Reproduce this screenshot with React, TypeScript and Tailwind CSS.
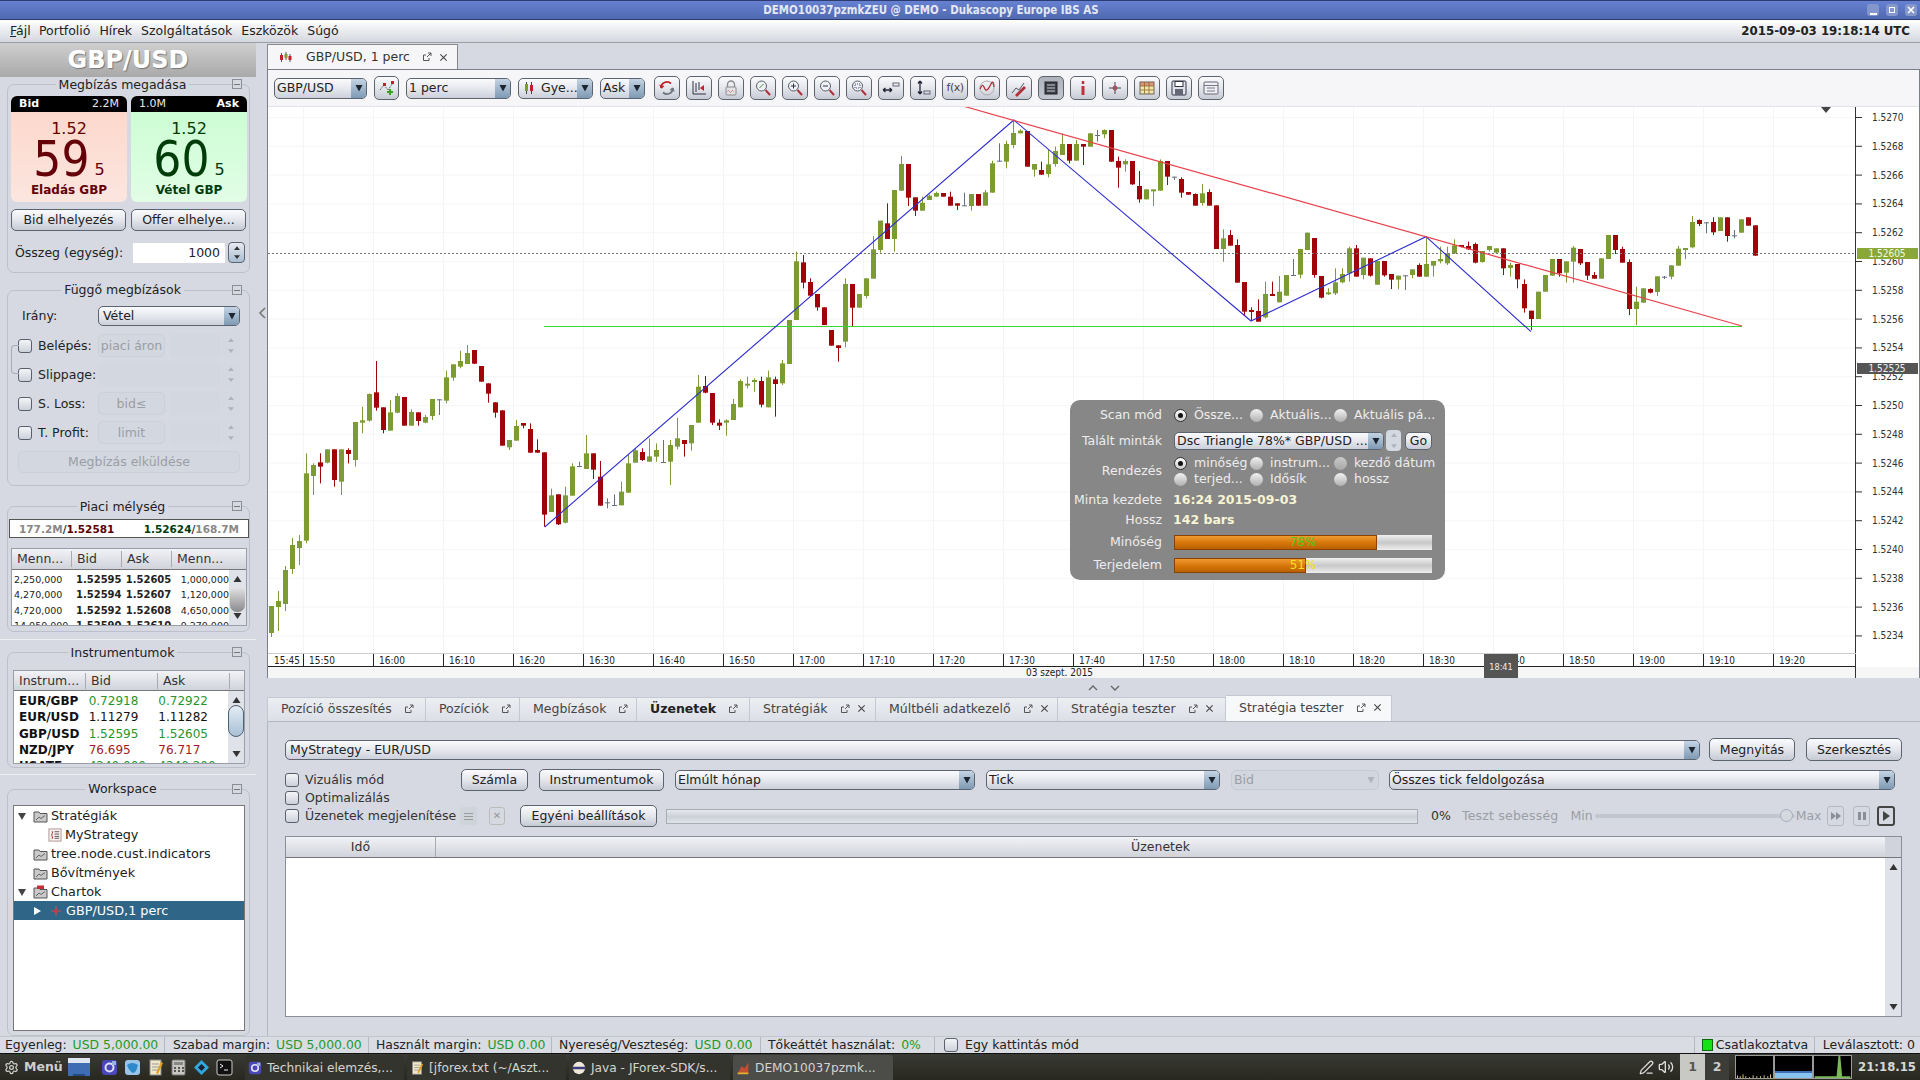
import React from "react";
import { Settings, Volume2, PenLine } from "lucide-react";

type C = [number, number, number, number, number];
// 1 green, 0 red, 2 doji; body top, body bottom, wick top, wick bottom (y = 100 + v / 3)
const SEG1: C[] = [
[1,1518,1599,1518,1611],[1,1503,1521,1473,1593],[1,1410,1512,1398,1533],
[1,1335,1407,1314,1422],[1,1323,1344,1305,1395],[1,1120,1322,1060,1330],[1,1095,1128,1090,1185],[0,1087,1100,1060,1150],[1,1048,1088,1048,1090],[0,1048,1140,1048,1160],[1,1048,1145,1048,1185],[0,1050,1062,1045,1090],[1,966,1080,966,1100],[1,961,968,920,1000],[1,882,962,880,965],[0,877,923,783,932],[0,922,990,922,1000],[1,937,992,900,992],[1,888,938,880,940],[0,891,977,891,977],[1,936,977,928,977],[0,937,963,937,977],[1,951,968,945,970],[1,897,948,897,960],[2,898,900,898,945],[1,832,902,812,910],[1,793,833,793,842],[1,783,800,752,805],[1,759,792,735,792],[0,750,791,750,792],[0,798,845,798,845],[0,850,881,850,908],[0,907,938,907,953],[0,931,1037,931,1037],[1,1020,1042,1020,1050],[1,978,1022,960,1022],[0,969,977,969,985],[0,987,1058,970,1058],[0,1050,1058,1018,1058],[0,1057,1244,1057,1280],[1,1186,1236,1166,1236],[0,1183,1273,1183,1275],[1,1186,1268,1160,1270],[1,1099,1187,1090,1187],[2,1098,1100,1085,1100],[1,1060,1107,1005,1107],[0,1060,1109,1060,1137],[0,1130,1217,1083,1217],[2,1207,1209,1195,1225],[2,1215,1217,1183,1217],[1,1175,1216,1145,1216],[1,1090,1178,1065,1178],[1,1051,1088,1045,1088],[0,1056,1080,1045,1083],[1,1069,1085,1015,1085],[1,1050,1070,1030,1085],[2,1086,1088,1020,1088],[1,1035,1085,1020,1155],[1,1015,1040,953,1048],[0,1020,1032,1020,1070],[1,975,1030,975,1052],[1,860,968,825,968],[0,858,878,828,880],[0,879,968,879,975],[0,968,977,958,990],[1,961,968,958,1007],[1,912,960,897,960],[1,843,922,838,922],[1,851,855,830,865],[1,840,844,835,875],[0,843,914,830,922],[1,832,922,812,922],[0,838,852,830,950],[1,790,850,780,855],[1,660,792,660,792],[1,484,660,455,660],[0,487,548,465,565],[0,546,587,535,590],[0,582,622,582,632],[0,622,675,622,675],[0,690,737,690,737],[0,736,744,736,785],[1,552,725,535,742],[0,552,623,552,680],[1,582,623,582,623],[1,535,588,535,595],[1,448,536,408,536],[1,362,450,362,458],[0,370,417,310,417],[1,270,417,270,455],[1,192,272,168,272],[0,192,293,192,318],[0,292,332,292,348],[1,308,332,290,332],[1,287,300,283,300],[1,279,290,275,290],[0,279,290,279,290],[0,290,317,275,317],[0,310,317,310,330],[2,316,318,278,318],[1,282,318,282,332],[0,282,317,282,317],[1,277,317,270,317],[1,190,278,182,278],[2,182,184,130,185],[1,132,185,122,205],[1,99,135,60,145],[1,92,100,88,100],[0,93,200,93,200],[1,192,209,192,230],[0,210,224,185,225],[1,193,222,150,232],[1,153,192,140,200],[1,132,165,100,165],[0,132,182,132,190],[1,132,182,120,182],[0,132,140,132,195],[1,100,140,100,140],[2,105,107,90,125],
];
const SEG2: C[] = [
[1,90,103,88,115],[0,90,185,90,185],[0,183,203,170,263],[1,183,193,178,215],[0,183,253,183,255],[0,258,298,213,308],[1,268,298,268,298],[1,268,272,268,318],[1,183,272,178,272],[0,183,230,183,255],[2,230,232,230,240],[0,237,278,232,293],[0,276,284,276,285],[0,282,317,280,317],[1,280,309,252,317],[0,276,317,268,317],[0,316,447,316,447],[1,415,447,388,485],[0,405,437,390,437],[0,435,548,418,548],[0,546,635,546,645],[0,630,636,622,660],[0,633,665,598,665],[1,582,652,545,655],[0,582,587,545,587],[1,575,607,528,607],[1,525,587,525,587],[2,525,527,477,527],[1,447,524,447,535],[1,398,450,398,450],[0,414,525,414,533],[0,528,593,528,595],[1,577,583,565,585],[1,547,580,505,585],[1,522,547,505,550],[1,445,520,440,545],[0,445,530,435,530],[1,473,525,473,538],[0,475,527,475,530],[1,483,554,483,555],[0,483,526,483,530],[0,522,539,522,567],[1,527,539,527,568],[2,526,528,526,570],[1,508,525,508,535],[0,495,530,490,530],[1,492,530,410,530],[1,483,497,483,530],[1,477,484,440,490],[1,460,490,440,495],[1,436,460,418,462],[0,435,440,435,442],[0,438,448,425,450],[0,432,488,428,490],[1,453,486,453,488],[1,438,450,438,455],[1,445,458,445,458],[0,445,505,445,525],[1,495,504,488,530],[0,492,538,492,565],[0,552,625,538,638],[0,632,657,632,690],[1,575,657,575,657],[1,525,575,525,575],[1,477,527,477,527],[0,477,520,477,530],[1,484,518,484,548],[1,443,485,438,548],[0,447,490,447,495],[0,486,527,486,540],[0,525,536,516,536],[1,475,536,475,536],[1,405,477,405,477],[0,405,450,405,462],[0,447,488,440,488],[0,486,627,478,645],[1,605,627,560,675],[1,565,608,565,608],[0,567,578,565,580],[1,529,576,529,588],[2,530,532,528,537],[1,496,530,496,538],[1,446,497,438,497],[1,444,449,444,478],[1,366,442,348,445],[0,360,372,358,378],[2,367,369,367,400],[0,366,397,352,405],[1,352,393,352,393],[0,352,408,352,425],[2,406,408,390,415],[1,358,398,358,398],[0,352,377,352,377],[0,376,467,376,467],
];

const COL: Record<number, string> = { 0: "#a00408", 1: "#7d9b33", 2: "#667080" };

function Candle({ x, c }: { x: number; c: C }) {
  const [t, a, b, h, l] = c;
  const y = (v: number) => 100 + v / 3;
  return (
    <g>
      <rect x={x} y={y(h)} width={1} height={Math.max(1, (l - h) / 3)} fill={COL[t]} />
      {t === 2 ? (
        <rect x={x - 2} y={y(a)} width={5} height={1} fill={COL[2]} />
      ) : (
        <rect x={x - 2} y={y(a)} width={5} height={Math.max(2, (b - a) / 3)} fill={COL[t]} />
      )}
    </g>
  );
}

const PRICES = ["1.5270","1.5268","1.5266","1.5264","1.5262","1.5260","1.5258","1.5256","1.5254","1.5252","1.5250","1.5248","1.5246","1.5244","1.5242","1.5240","1.5238","1.5236","1.5234"];
const TIMES = ["15:50","16:00","16:10","16:20","16:30","16:40","16:50","17:00","17:10","17:20","17:30","17:40","17:50","18:00","18:10","18:20","18:30","18:40","18:50","19:00","19:10","19:20"];
const COND = "'DejaVu Sans Condensed','DejaVu Sans',sans-serif";

function Chart() {
  return (
    <svg viewBox="268 107 1651 571" className="block h-[571px] w-[1651px]">
      <rect x="268" y="107" width="1651" height="571" fill="#ffffff" />
      {TIMES.map((_, i) => <rect key={i} x={303 + i * 70} y="107" width="1" height="546" fill="#f5f5f5" />)}
      {PRICES.map((_, i) => <rect key={i} x="268" y={117 + i * 28.8} width="1588" height="1" fill="#f6f6f6" />)}
      {SEG1.map((c, i) => <Candle key={i} x={271 + i * 7} c={c} />)}
      {SEG2.map((c, i) => <Candle key={i} x={1104 + i * 7} c={c} />)}
      <line x1="268" y1="253.5" x2="1856" y2="253.5" stroke="#777" strokeDasharray="2 2" />
      <line x1="544" y1="326.5" x2="1742" y2="326.5" stroke="#35d935" strokeWidth="1.2" />
      <polyline points="544.7,527 1013.8,120 1251,321 1426,236.7 1531,331.7" fill="none" stroke="#2d2dd2" strokeWidth="1.1" />
      <line x1="964.5" y1="106.5" x2="1742" y2="326" stroke="#e8404a" strokeWidth="1.2" />
      <polygon points="1821,107 1831,107 1826,113" fill="#444" />
      {/* price axis */}
      <rect x="1855" y="107" width="1" height="571" fill="#333" />
      {PRICES.map((p, i) => (
        <g key={p}>
          <rect x="1856" y={117 + i * 28.8} width="6" height="1" fill="#333" />
          <text x="1872" y={121 + i * 28.8} fontSize="10" fontFamily={COND} fill="#333">{p}</text>
        </g>
      ))}
      <rect x="1857" y="248" width="61" height="11" fill="#8aa83a" />
      <text x="1887" y="257" fontSize="10" textAnchor="middle" fontFamily={COND} fill="#f4f8e0">1.52605</text>
      <rect x="1857" y="363" width="61" height="11" fill="#555555" />
      <text x="1887" y="372" fontSize="10" textAnchor="middle" fontFamily={COND} fill="#eeeeee">1.52525</text>
      {/* time axis */}
      <rect x="268" y="653" width="1588" height="1" fill="#ccc" />
      <rect x="268" y="666" width="1588" height="1" fill="#222" />
      <rect x="268" y="667" width="1651" height="11" fill="#f6f6f6" />
      <text x="274" y="664" fontSize="10" fontFamily={COND} fill="#222">15:45</text>
      {TIMES.map((t, i) => (
        <g key={t}>
          <rect x={303 + i * 70} y="654" width="1" height="12" fill="#222" />
          <text x={309 + i * 70} y="664" fontSize="10" fontFamily={COND} fill="#222">{t}</text>
        </g>
      ))}
      <rect x="1855" y="654" width="1" height="24" fill="#333" />
      <text x="1026" y="676" fontSize="10" fontFamily={COND} fill="#222">03 szept. 2015</text>
      <rect x="1484" y="654" width="34" height="24" fill="#555" />
      <text x="1501" y="670" fontSize="9" textAnchor="middle" fontFamily={COND} fill="#eee">18:41</text>
    </svg>
  );
}

const Tri = ({ color = "#223" }: { color?: string }) => (
  <svg viewBox="0 0 8 8" className="h-[8px] w-[8px]"><polygon points="0.5,1 7.5,1 4,7.5" fill={color} /></svg>
);

function Btn({ className = "", children, disabled, pressed }: { className?: string; children?: React.ReactNode; disabled?: boolean; pressed?: boolean }) {
  if (disabled) return <div className={"flex shrink-0 items-center justify-center rounded-[5px] border border-[#ccd0d8] bg-[#d3d7df] text-[#9a9ea6] " + className}>{children}</div>;
  if (pressed) return <div className={"flex shrink-0 items-center justify-center rounded-[5px] border border-[#5c6470] bg-linear-to-b from-[#aeb2ba] to-[#c2c6ce] text-[#222] " + className}>{children}</div>;
  return <div className={"flex shrink-0 items-center justify-center rounded-[5px] border border-[#5c6470] bg-linear-to-b from-[#fbfbfd] via-[#e4e6ec] to-[#c6cad4] text-[#222] " + className}>{children}</div>;
}

function Sel({ className = "", text, disabled }: { className?: string; text: React.ReactNode; disabled?: boolean }) {
  return (
    <div className={"flex shrink-0 items-stretch overflow-hidden rounded-[5px] border " + (disabled ? "border-[#c6cad2] bg-[#d2d6de] text-[#9a9ea6] " : "border-[#5c6470] bg-linear-to-b from-[#fbfbfd] via-[#e6e8ee] to-[#ccd0da] text-[#222] ") + className}>
      <div className="flex min-w-0 flex-1 items-center overflow-hidden whitespace-nowrap pl-[2px]">{text}</div>
      <div className={"flex w-[15px] shrink-0 items-center justify-center " + (disabled ? "" : "bg-linear-to-b from-[#c4d4e4] to-[#7e9ab4]")}><Tri color={disabled ? "#b0b4bc" : "#1c2430"} /></div>
    </div>
  );
}

const Check = ({ dim }: { dim?: boolean }) => (
  <div className={"h-[14px] w-[14px] shrink-0 rounded-[3px] border bg-linear-to-b from-[#f4f5f8] to-[#cdd1da] " + (dim ? "border-[#8a8f98]" : "border-[#59606c]")} />
);

function Spin({ className = "", disabled }: { className?: string; disabled?: boolean }) {
  return (
    <div className={"flex shrink-0 flex-col items-center justify-around rounded-[4px] " + (disabled ? "bg-[#d4d8e0] " : "border border-[#5c6470] bg-linear-to-b from-[#e8eaf0] to-[#a9bed2] ") + className}>
      <svg viewBox="0 0 8 5" className="h-[4px] w-[6px]"><polygon points="0,5 8,5 4,0" fill={disabled ? "#aeb2ba" : "#333"} /></svg>
      <svg viewBox="0 0 8 5" className="h-[4px] w-[6px]"><polygon points="0,0 8,0 4,5" fill={disabled ? "#aeb2ba" : "#333"} /></svg>
    </div>
  );
}

function Group({ title, className = "", up, children }: { title: string; className?: string; up?: boolean; children?: React.ReactNode }) {
  return (
    <div className={"relative ml-[7px] w-[243px] rounded-[7px] border border-[#bcc0ca] " + className}>
      <div className={"absolute left-0 right-[12px] flex justify-center " + (up ? "-top-[9px]" : "-top-[8px]")}>
        <span className="bg-[#d6d9e1] px-[3px] leading-[16px] text-[#222]">{title}</span>
      </div>
      <div className="absolute -top-[6px] right-[7px] flex h-[10px] w-[10px] items-center justify-center border border-[#8a8e96] bg-[#d6d9e1]">
        <div className="h-[1px] w-[6px] bg-[#777]" />
      </div>
      {children}
    </div>
  );
}

function PriceBox({ side }: { side: "bid" | "ask" }) {
  const bid = side === "bid";
  const col = bid ? "text-[#640008]" : "text-[#003c0a]";
  return (
    <div className={"flex h-[106px] w-[116px] flex-col items-center overflow-hidden rounded-[6px] " + (bid ? "bg-linear-to-b from-[#fdd6c9] to-[#fbe6df]" : "bg-linear-to-b from-[#c8fdd0] to-[#e2fde6]")}>
      <div className="flex h-[16px] w-full shrink-0 items-center justify-between bg-black px-[8px] text-[11px] text-[#e8e8e8]">
        {bid ? <><b className="text-white">Bid</b><span>2.2M</span></> : <><span>1.0M</span><b className="text-white">Ask</b></>}
      </div>
      <div className={"mt-[8px] h-[17px] text-[16px] leading-[17px] " + col}>1.52</div>
      <div className={"mt-[2px] flex h-[41px] items-end gap-[5px] " + col}>
        <span className="h-[41px] font-['DejaVu_Sans_Condensed','DejaVu_Sans',sans-serif] text-[49px] leading-[41px]">{bid ? "59" : "60"}</span>
        <span className="mb-[2px] h-[16px] text-[16px] leading-[16px]">5</span>
      </div>
      <div className={"mt-[2px] h-[16px] text-[12px] font-bold leading-[16px] " + col}>{bid ? "Eladás GBP" : "Vétel GBP"}</div>
    </div>
  );
}

function OrderRow({ label, btn, wide }: { label: string; btn?: string; wide?: boolean }) {
  return (
    <div className="flex h-[23px] items-center pl-[10px]">
      <Check />
      <span className="ml-[6px] w-[60px] whitespace-nowrap">{label}</span>
      {wide ? (
        <div className="h-[23px] w-[122px] rounded-[4px] bg-[#d3d7df]" />
      ) : (
        <>
          <Btn disabled className="h-[23px] w-[67px]">{btn}</Btn>
          <div className="ml-[5px] h-[23px] w-[50px] rounded-[2px] bg-[#d3d7df]" />
        </>
      )}
      <Spin disabled className="ml-[2px] h-[23px] w-[18px]" />
    </div>
  );
}

const DEPTH = [
  ["2,250,000", "1.52595", "1.52605", "1,000,000"],
  ["4,270,000", "1.52594", "1.52607", "1,120,000"],
  ["4,720,000", "1.52592", "1.52608", "4,650,000"],
  ["14,050,000", "1.52590", "1.52610", "9,270,000"],
];
const INSTR: [string, string, string, string][] = [
  ["EUR/GBP", "0.72918", "0.72922", "text-[#25962f]"],
  ["EUR/USD", "1.11279", "1.11282", "text-[#111]"],
  ["GBP/USD", "1.52595", "1.52605", "text-[#25962f]"],
  ["NZD/JPY", "76.695", "76.717", "text-[#a01c1c]"],
  ["USATE", "4240.000", "4240.200", "text-[#25962f]"],
];

function VScroll({ className = "" }: { className?: string }) {
  return (
    <div className={"flex shrink-0 flex-col items-center justify-between bg-[#dfe2e8] py-[6px] " + className}>
      <svg viewBox="0 0 8 6" className="h-[6px] w-[9px]"><polygon points="0,6 8,6 4,0" fill="#333" /></svg>
      <svg viewBox="0 0 8 6" className="h-[6px] w-[9px]"><polygon points="0,0 8,0 4,6" fill="#333" /></svg>
    </div>
  );
}

const Arrow = ({ open, white }: { open?: boolean; white?: boolean }) => (
  <svg viewBox="0 0 8 8" className="h-[8px] w-[8px] shrink-0">
    {open ? <polygon points="0,1 8,1 4,8" fill="#444" /> : <polygon points="1,0 8,4 1,8" fill={white ? "#fff" : "#444"} />}
  </svg>
);

const FolderIcon = ({ red }: { red?: boolean }) => (
  <svg viewBox="0 0 15 14" className="h-[14px] w-[15px] shrink-0">
    <path d="M1 3h5l1 1.5h7V13H1z" fill="#c9c9c9" stroke="#555" strokeWidth="1" />
    {red && <rect x="4" y="0.5" width="7" height="3.5" fill="#c0303a" />}
    <path d="M3 11l3-3 2 1.5 4-3" fill="none" stroke="#666" strokeWidth="1" />
  </svg>
);

function TreeRow({ pad, arrow, open, icon, text, selected }: { pad: string; arrow?: boolean; open?: boolean; icon: React.ReactNode; text: string; selected?: boolean }) {
  return (
    <div className={"flex h-[19px] items-center " + pad + (selected ? " bg-[#2f6688] text-white" : " text-[#222]")}>
      <div className="flex w-[15px] shrink-0 justify-start">{arrow && <Arrow open={open} white={selected} />}</div>
      {icon}
      <span className="ml-[3px] whitespace-nowrap text-[12.8px]">{text}</span>
    </div>
  );
}

function Left() {
  return (
    <div className="w-[256px] shrink-0">
      <div className="flex h-[34px] items-center justify-center bg-linear-to-b from-[#cfcfcf] to-[#a9a9a9] text-[24px] font-bold text-white [text-shadow:1px_1px_1px_#777]">GBP/USD</div>

      <Group title="Megbízás megadása" className="mt-[7px] h-[189px] pt-[11px]">
        <div className="ml-[3px] flex gap-[4px]"><PriceBox side="bid" /><PriceBox side="ask" /></div>
        <div className="ml-[3px] mt-[7px] flex gap-[5px]">
          <Btn className="h-[22px] w-[115px]">Bid elhelyezés</Btn>
          <Btn className="h-[22px] w-[115px]">Offer elhelye...</Btn>
        </div>
        <div className="mt-[11px] flex items-center pl-[7px]">
          <span className="w-[118px] whitespace-nowrap">Összeg (egység):</span>
          <div className="flex h-[20px] w-[92px] items-center justify-end bg-white pr-[5px] text-[#222]">1000</div>
          <Spin className="ml-[3px] h-[21px] w-[17px]" />
        </div>
      </Group>

      <Group title="Függő megbízások" up className="mt-[17px] h-[196px] pt-[15px]">
        <div className="flex items-center pl-[14px]">
          <span className="w-[76px]">Irány:</span>
          <Sel className="h-[20px] w-[142px]" text={<span className="pl-[2px]">Vétel</span>} />
        </div>
        <div className="relative mt-[8px] flex flex-col gap-[6px]">
          <div className="absolute left-[3px] top-[11px] h-[29px] w-[8px] rounded-l-[4px] border-y border-l border-[#a8acb6]" />
          <OrderRow label="Belépés:" btn="piaci áron" />
          <OrderRow label="Slippage:" wide />
          <OrderRow label="S. Loss:" btn="bid≤" />
          <OrderRow label="T. Profit:" btn="limit" />
        </div>
        <Btn disabled className="ml-[10px] mt-[7px] h-[22px] w-[222px]">Megbízás elküldése</Btn>
      </Group>

      <Group title="Piaci mélység" className="mt-[20px] h-[126px] pt-[12px]">
        <div className="ml-[1px] flex h-[19px] w-[240px] items-center justify-between border border-[#555] bg-white px-[9px] text-[10.5px] font-bold">
          <span className="text-[#888]">177.2M<span className="text-[#333]">/</span><span className="text-[#5a0006]">1.52581</span></span>
          <span className="text-[#888]"><span className="text-[#003c0a]">1.52624</span><span className="text-[#333]">/</span>168.7M</span>
        </div>
        <div className="ml-[3px] mt-[10px] flex h-[78px] w-[236px] flex-col overflow-hidden border border-[#9a9ea8] bg-white">
          <div className="flex h-[21px] shrink-0 items-center border-b border-[#777] bg-linear-to-b from-[#f2f3f6] to-[#d0d3db] text-[#333]">
            <div className="w-[60px] border-r border-[#aaa] pl-[5px]">Menn...</div>
            <div className="w-[50px] border-r border-[#aaa] pl-[5px]">Bid</div>
            <div className="w-[50px] border-r border-[#aaa] pl-[5px]">Ask</div>
            <div className="w-[59px] pl-[5px]">Menn...</div>
          </div>
          <div className="flex min-h-0 flex-1">
            <div className="w-[218px] overflow-hidden pt-[2px] text-[9.5px]">
              {DEPTH.map((r) => (
                <div key={r[0]} className="flex h-[15.5px] items-center text-[#222]">
                  <span className="w-[60px] whitespace-nowrap pl-[2px]">{r[0]}</span>
                  <span className="w-[50px] text-right text-[10px] font-bold">{r[1]}</span>
                  <span className="w-[50px] text-right text-[10px] font-bold">{r[2]}</span>
                  <span className="w-[58px] text-right">{r[3]}</span>
                </div>
              ))}
            </div>
            <div className="relative w-[17px]">
              <VScroll className="h-full w-[17px]" />
              <div className="absolute left-[1px] top-[16px] h-[26px] w-[15px] rounded-[7px] bg-linear-to-b from-[#e8e8ea] to-[#8a8a8e]" />
            </div>
          </div>
        </div>
      </Group>

      <div className="mt-[7px] h-[1px] bg-[#eceef2]" />

      <Group title="Instrumentumok" className="mt-[12px] h-[116px] pt-[17px]">
        <div className="ml-[5px] flex h-[94px] w-[232px] flex-col overflow-hidden border border-[#9a9ea8] bg-white">
          <div className="flex h-[20px] shrink-0 items-center border-b border-[#777] bg-linear-to-b from-[#f2f3f6] to-[#d0d3db] text-[#333]">
            <div className="w-[72px] whitespace-nowrap border-r border-[#aaa] pl-[5px]">Instrum...</div>
            <div className="w-[72px] border-r border-[#aaa] pl-[5px]">Bid</div>
            <div className="w-[72px] border-r border-[#aaa] pl-[5px]">Ask</div>
          </div>
          <div className="flex min-h-0 flex-1">
            <div className="w-[215px] overflow-hidden pl-[5px] pt-[2px]">
              {INSTR.map((r) => (
                <div key={r[0]} className="flex h-[16.3px] items-center text-[12px]">
                  <b className="w-[72px] text-[12px] text-[#111]">{r[0]}</b>
                  <span className={"w-[72px] " + r[3]}>{r[1]}</span>
                  <span className={"w-[72px] " + r[3]}>{r[2]}</span>
                </div>
              ))}
            </div>
            <div className="relative w-[16px]">
              <VScroll className="h-full w-[16px]" />
              <div className="absolute left-0 top-[14px] h-[32px] w-[16px] rounded-[8px] border border-[#50606e] bg-linear-to-b from-[#e4ecf4] to-[#a8c0d6]" />
            </div>
          </div>
        </div>
      </Group>

      <div className="mt-[6px] h-[1px] bg-[#eceef2]" />

      <Group title="Workspace" up className="mt-[14px] h-[247px] pt-[15px]">
        <div className="ml-[5px] h-[226px] w-[232px] border border-[#777] bg-white">
          <TreeRow pad="pl-[4px]" arrow open icon={<FolderIcon />} text="Stratégiák" />
          <TreeRow pad="pl-[19px]" icon={
            <svg viewBox="0 0 15 15" className="h-[14px] w-[14px] shrink-0"><rect x="1" y="1" width="13" height="13" fill="#f7f2f0" stroke="#b09090" /><path d="M4 4h1l-1 3.5 1 3.5H4" fill="none" stroke="#b03030" /><path d="M7 4h5M7 6.5h5M7 9h5M7 11h5" stroke="#555" /></svg>
          } text="MyStrategy" />
          <TreeRow pad="pl-[4px]" icon={<FolderIcon />} text="tree.node.cust.indicators" />
          <TreeRow pad="pl-[4px]" icon={<FolderIcon />} text="Bővítmények" />
          <TreeRow pad="pl-[4px]" arrow open icon={<FolderIcon red />} text="Chartok" />
          <div className="flex h-[19px] items-center bg-[#2f6688] pl-[19px] text-white">
            <div className="w-[17px]"><Arrow white /></div>
            <svg viewBox="0 0 12 12" className="h-[12px] w-[12px] shrink-0"><path d="M6 1v10M1 6h10" stroke="#b8505a" strokeWidth="1.2" /><circle cx="6" cy="6" r="2.2" fill="#c0404a" /></svg>
            <span className="ml-[4px] whitespace-nowrap text-[12.8px]">GBP/USD,1 perc</span>
          </div>
        </div>
      </Group>
    </div>
  );
}

const Pop = () => (
  <svg viewBox="0 0 10 10" className="h-[10px] w-[10px] shrink-0"><path d="M1.5 3v5.5H7M1.5 3H4M7 8.5V6" fill="none" stroke="#555" /><path d="M5 5l4-4M6 1h3v3" fill="none" stroke="#555" /></svg>
);
const Xx = () => (
  <svg viewBox="0 0 10 10" className="h-[9px] w-[9px] shrink-0"><path d="M1.5 1.5l7 7M8.5 1.5l-7 7" stroke="#444" strokeWidth="1.2" /></svg>
);

function Tab({ w, text, bold, close, active }: { w: string; text: string; bold?: boolean; close?: boolean; active?: boolean }) {
  return (
    <div className={"flex shrink-0 items-center whitespace-nowrap border-r border-[#b4b8c2] pb-[2px] pl-[13px] " + w + (active ? " -mt-[2px] h-[26px] border-t border-[#c4c8d0] bg-[#f7f8fa]" : " h-[24px] border-t border-[#c4c8d0] bg-linear-to-b from-[#eceef2] to-[#dcdfe6]")}>
      <span className={(bold ? "font-bold text-[#222]" : "text-[#444]")}>{text}</span>
      <span className="ml-[12px] flex items-center gap-[7px]"><Pop />{close && <Xx />}</span>
    </div>
  );
}

const I = ({ children }: { children: React.ReactNode }) => (
  <svg viewBox="0 0 18 18" className="h-[18px] w-[18px]" fill="none">{children}</svg>
);
const Mag = ({ children }: { children?: React.ReactNode }) => (
  <I>
    <circle cx="7.5" cy="7" r="5" fill="#eef1f6" stroke="#5a6068" />
    <path d="M11.5 11l4.5 5" stroke="#b03038" strokeWidth="2" />
    {children}
  </I>
);

const ICONS: React.ReactNode[] = [
  <I><path d="M3 9a6 6 0 0 1 10-4.5" stroke="#c02028" strokeWidth="1.8" /><path d="M1 5.5L3.6 9.8 6.4 7z" fill="#c02028" /><path d="M15 9a6 6 0 0 1-10 4.5" stroke="#70747c" strokeWidth="1.8" /><path d="M17 12.5l-2.6-4.3-2.8 2.8z" fill="#70747c" /></I>,
  <I><path d="M3 2v13h13" stroke="#334" /><path d="M6 4v9M9 3v8" stroke="#334" /><path d="M14 6l-4 3 4 3z" fill="#c02028" /></I>,
  <I><path d="M5.5 8V5.5a3.5 3.5 0 0 1 7 0V8" stroke="#8a8a8a" strokeWidth="1.3" /><rect x="4" y="8" width="10" height="8" rx="1" fill="#e2e2e4" stroke="#8a8a8a" /><path d="M5.5 12.5q1 -2 2 0t2 0 2 0" stroke="#c07078" /></I>,
  <Mag><path d="M5.5 9l4-4" stroke="#4a8a40" /></Mag>,
  <Mag><path d="M7.5 4.5v5M5 7h5" stroke="#334" /></Mag>,
  <Mag><path d="M5 7h5" stroke="#334" /></Mag>,
  <Mag><path d="M5 5h5v4H5z" stroke="#556" strokeDasharray="1 1" /></Mag>,
  <I><path d="M1 11h9M1 11l2.5-2M1 11l2.5 2M10 11l-2.5-2M10 11l-2.5 2" stroke="#223" strokeWidth="1.3" /><rect x="11" y="4" width="6" height="3" stroke="#667" /></I>,
  <I><path d="M6 2v13M6 2L4 4.5M6 2l2 2.5M6 15l-2-2.5M6 15l2-2.5" stroke="#223" strokeWidth="1.3" /><rect x="10" y="12" width="6" height="3" stroke="#667" /></I>,
  <span className="whitespace-nowrap text-[11px] tracking-[-0.5px] text-[#444]">f(x)</span>,
  <I><circle cx="9" cy="9" r="7" stroke="#aaa" /><path d="M2 10q2.5 -6 4 -2t3 3 4 -6 3 3" stroke="#b03038" strokeWidth="1.3" /></I>,
  <I><path d="M2 14l4-5 3 2 5-7" stroke="#556" /><path d="M5 16l9-9 2 2-9 9z" fill="#b03038" /></I>,
  <I><rect x="3" y="3" width="12" height="12" fill="#3c3f46" stroke="#222" /><path d="M5 6h8M5 9h8M5 12h8" stroke="#cfd2d8" /></I>,
  <I><path d="M9 2v3" stroke="#c03038" strokeWidth="2.5" /><path d="M9 7v9" stroke="#c03038" strokeWidth="3" /></I>,
  <I><path d="M9 3v12M3 9h12" stroke="#445" /><circle cx="9" cy="9" r="2" stroke="#b03038" /></I>,
  <I><rect x="2" y="3" width="14" height="12" fill="#f0e4b8" stroke="#665" /><path d="M2 7h14M2 11h14M6.5 3v12M11 3v12" stroke="#a08030" /><rect x="2" y="3" width="14" height="4" fill="#b05040" opacity=".5" /></I>,
  <I><rect x="2" y="2" width="14" height="14" rx="1" fill="#dfe2e8" stroke="#334" /><rect x="5" y="2.5" width="8" height="5" fill="#fff" stroke="#334" /><rect x="5" y="10" width="8" height="6" fill="#667" /></I>,
  <I><rect x="2" y="3" width="14" height="12" rx="1" fill="#eef0f4" stroke="#667" /><path d="M2 6.5h14M5 9h8M5 12h8" stroke="#778" /></I>,
];

const Radio = ({ on, dim }: { on?: boolean; dim?: boolean }) => (
  <div className={"flex h-[13px] w-[13px] shrink-0 items-center justify-center rounded-full bg-linear-to-b " + (on ? "border border-[#333] from-white to-[#ccc]" : dim ? "from-[#c9c9c9] to-[#a8a8a8]" : "from-[#f2f2f2] to-[#b0b0b0]")}>
    {on && <div className="h-[5px] w-[5px] rounded-full bg-[#111]" />}
  </div>
);

function RadioCell({ w, on, dim, text }: { w: string; on?: boolean; dim?: boolean; text: string }) {
  return (
    <div className={"flex items-center gap-[7px] whitespace-nowrap " + w}>
      <Radio on={on} dim={dim} /><span>{text}</span>
    </div>
  );
}

function Bar({ fill, label, color }: { fill: string; label: string; color: string }) {
  return (
    <div className="relative h-[15px] w-[258px] bg-linear-to-b from-[#f0f0f0] via-[#c8c8c8] to-[#eeeeee]">
      <div className={"h-full border border-[#8a4200] bg-linear-to-b from-[#f09a30] via-[#d87808] to-[#b86000] " + fill} />
      <div className={"absolute inset-0 flex items-center justify-center text-[12px] " + color}>{label}</div>
    </div>
  );
}

function Overlay() {
  const lab = "w-[92px] shrink-0 text-right";
  return (
    <div className="absolute left-[802px] top-[293px] h-[180px] w-[375px] rounded-[10px] bg-[#878787] pt-[7px] text-[#ededed]">
      <div className="flex h-[16px] items-center">
        <div className={lab}>Scan mód</div>
        <div className="ml-[12px] flex">
          <RadioCell w="w-[76px]" on text="Össze..." />
          <RadioCell w="w-[84px]" text="Aktuális..." />
          <RadioCell w="w-[90px]" text="Aktuális pá..." />
        </div>
      </div>
      <div className="mt-[8px] flex h-[19px] items-center">
        <div className={lab}>Talált minták</div>
        <Sel className="ml-[12px] h-[18px] w-[210px]" text="Dsc Triangle 78%* GBP/USD ..." />
        <Spin disabled className="ml-[2px] h-[21px] w-[15px]" />
        <Btn className="ml-[4px] h-[18px] w-[27px]">Go</Btn>
      </div>
      <div className="mt-[5px] flex h-[32px] items-center">
        <div className={lab}>Rendezés</div>
        <div className="ml-[12px]">
          <div className="flex h-[16px] items-center">
            <RadioCell w="w-[76px]" on text="minőség" />
            <RadioCell w="w-[84px]" text="instrum..." />
            <RadioCell w="w-[90px]" dim text="kezdő dátum" />
          </div>
          <div className="flex h-[16px] items-center">
            <RadioCell w="w-[76px]" text="terjed..." />
            <RadioCell w="w-[84px]" text="Idősík" />
            <RadioCell w="w-[90px]" text="hossz" />
          </div>
        </div>
      </div>
      <div className="mt-[5px] flex h-[16px] items-center">
        <div className={lab + " whitespace-nowrap"}>Minta kezdete</div>
        <b className="ml-[11px] text-[#f7f5d4]">16:24 2015-09-03</b>
      </div>
      <div className="mt-[4px] flex h-[16px] items-center">
        <div className={lab}>Hossz</div>
        <b className="ml-[11px] text-[#f7f5d4]">142 bars</b>
      </div>
      <div className="mt-[6px] flex h-[16px] items-center">
        <div className={lab}>Minőség</div>
        <div className="ml-[12px]"><Bar fill="w-[203px]" label="78%" color="text-[#4fc81e]" /></div>
      </div>
      <div className="mt-[7px] flex h-[16px] items-center">
        <div className={lab}>Terjedelem</div>
        <div className="ml-[12px]"><Bar fill="w-[132px]" label="51%" color="text-[#f4e020]" /></div>
      </div>
    </div>
  );
}

function Right() {
  return (
    <div className="flex w-[1653px] shrink-0 flex-col">
      <div className="flex h-[26px] shrink-0 items-end">
        <div className="flex h-[25px] w-[191px] items-center border-x border-t border-[#888] bg-[#f6f6f8] pl-[11px] text-[#333]">
          <svg viewBox="0 0 14 12" className="h-[12px] w-[14px] shrink-0"><path d="M2.5 2v9M7 1v8M11 3v8" stroke="#555" /><rect x="1" y="4" width="3" height="5" fill="#c02028" /><rect x="5.5" y="3" width="3" height="4" fill="#7d9b33" /><rect x="9.5" y="5" width="3" height="4" fill="#c02028" /></svg>
          <span className="ml-[13px] whitespace-nowrap">GBP/USD, 1 perc</span>
          <span className="ml-[12px] flex items-center gap-[7px]"><Pop /><Xx /></span>
        </div>
      </div>

      <div className="h-[609px] shrink-0 border border-[#7a7e88]">
        <div className="flex h-[37px] items-center border-b border-[#e0e2e6] bg-[#f6f6f8] pl-[6px]">
          <Sel className="h-[21px] w-[93px]" text="GBP/USD" />
          <Btn className="ml-[7px] h-[24px] w-[25px]">
            <svg viewBox="0 0 16 16" className="h-[16px] w-[16px]"><path d="M1 10l4-5 4 5 5-7" fill="none" stroke="#666" strokeDasharray="2 1" /><rect x="4" y="3" width="3" height="3" fill="#c02028" /><rect x="12" y="1" width="3" height="3" fill="#c02028" /><path d="M11 9v6M8 12h6" stroke="#3aa020" strokeWidth="2" /></svg>
          </Btn>
          <Sel className="ml-[7px] h-[21px] w-[105px]" text="1 perc" />
          <Sel className="ml-[7px] h-[21px] w-[75px]" text={<span className="flex items-center gap-[7px] pl-[3px]"><svg viewBox="0 0 10 14" className="h-[14px] w-[10px]"><path d="M2.5 1v12M7.5 1v12" stroke="#444" /><rect x="1" y="3" width="3" height="7" fill="#7d9b33" /><rect x="6" y="4" width="3" height="6" fill="#c02028" /></svg>Gye...</span>} />
          <Sel className="ml-[7px] h-[21px] w-[45px]" text="Ask" />
          <div className="ml-[9px] flex gap-[6px]">
            {ICONS.map((ic, i) => (
              <Btn key={i} pressed={i === 12} className="h-[24px] w-[26px]">{ic}</Btn>
            ))}
          </div>
        </div>
        <div className="relative">
          <Chart />
          <Overlay />
        </div>
      </div>

      <div className="flex h-[19px] shrink-0 items-center justify-center gap-[12px]">
        <svg viewBox="0 0 10 6" className="ml-[20px] h-[6px] w-[10px]"><path d="M1 5l4-4 4 4" fill="none" stroke="#666" strokeWidth="1.3" /></svg>
        <svg viewBox="0 0 10 6" className="h-[6px] w-[10px]"><path d="M1 1l4 4 4-4" fill="none" stroke="#666" strokeWidth="1.3" /></svg>
      </div>

      <div className="flex h-[24px] shrink-0 items-end">
        <Tab w="w-[159px] border-l" text="Pozíció összesítés" />
        <Tab w="w-[94px]" text="Pozíciók" />
        <Tab w="w-[117px]" text="Megbízások" />
        <Tab w="w-[113px]" bold text="Üzenetek" />
        <Tab w="w-[126px]" close text="Stratégiák" />
        <Tab w="w-[182px]" close text="Múltbéli adatkezelő" />
        <Tab w="w-[168px]" close text="Stratégia teszter" />
        <Tab w="w-[166px]" active close text="Stratégia teszter" />
      </div>

      <div className="min-h-0 flex-1 border-l border-t border-[#b4b8c2] pl-[17px] text-[#333]">
        <div className="mt-[16px] flex h-[23px] items-center">
          <Sel className="h-[20px] w-[1415px]" text={<span className="pl-[2px]">MyStrategy  -  EUR/USD</span>} />
          <Btn className="ml-[9px] h-[23px] w-[86px]">Megnyitás</Btn>
          <Btn className="ml-[11px] h-[23px] w-[96px]">Szerkesztés</Btn>
        </div>

        <div className="mt-[8px] flex h-[22px] items-center">
          <div className="flex w-[176px] items-center gap-[6px]"><Check /><span>Vizuális mód</span></div>
          <Btn className="h-[22px] w-[67px]">Számla</Btn>
          <Btn className="ml-[11px] h-[22px] w-[125px]">Instrumentumok</Btn>
          <Sel className="ml-[11px] h-[20px] w-[300px]" text="Elmúlt hónap" />
          <Sel className="ml-[11px] h-[20px] w-[234px]" text="Tick" />
          <Sel disabled className="ml-[11px] h-[20px] w-[148px]" text="Bid" />
          <Sel className="ml-[10px] h-[20px] w-[506px]" text="Összes tick feldolgozása" />
        </div>
        <div className="flex h-[14px] items-center gap-[6px]"><Check /><span>Optimalizálás</span></div>
        <div className="flex h-[22px] items-center">
          <div className="flex w-[175px] items-center gap-[6px] whitespace-nowrap"><Check /><span>Üzenetek megjelenítése</span></div>
          <div className="flex h-[18px] w-[17px] flex-col justify-center gap-[2px] rounded-[3px] bg-[#cfd3da] px-[4px]"><div className="h-[1px] bg-[#999]" /><div className="h-[1px] bg-[#999]" /><div className="h-[1px] bg-[#999]" /></div>
          <div className="ml-[12px] flex h-[18px] w-[16px] items-center justify-center rounded-[3px] border border-[#bbb] text-[10px] text-[#999]">✕</div>
          <Btn className="ml-[15px] h-[22px] w-[137px]">Egyéni beállítások</Btn>
          <div className="ml-[9px] h-[15px] w-[752px] border border-[#a8acb6] bg-linear-to-b from-[#e6e8ec] via-[#ccd0d8] to-[#e0e2e8]" />
          <span className="ml-[13px] w-[31px]">0%</span>
          <span className="whitespace-nowrap tracking-[0.2px] text-[#9a9ea6]">Teszt sebesség</span>
          <span className="ml-[12px] text-[#9a9ea6]">Min</span>
          <div className="relative ml-[2px] h-[4px] w-[200px] rounded bg-[#c2c6ce]">
            <div className="absolute -top-[5px] right-[2px] h-[13px] w-[13px] rounded-full border border-[#aab] bg-[#d4d8df]" />
          </div>
          <span className="ml-[1px] text-[#9a9ea6]">Max</span>
          <div className="ml-[6px] flex h-[20px] w-[17px] items-center justify-center rounded-[3px] border border-[#b4b8c2]">
            <svg viewBox="0 0 10 8" className="h-[8px] w-[10px]"><path d="M0 0l5 4-5 4zM5 0l5 4-5 4z" fill="#8a8e98" /></svg>
          </div>
          <div className="ml-[9px] flex h-[20px] w-[17px] items-center justify-center gap-[2px] rounded-[3px] border border-[#b4b8c2]"><div className="h-[8px] w-[3px] bg-[#8a8e98]" /><div className="h-[8px] w-[3px] bg-[#8a8e98]" /></div>
          <div className="ml-[7px] flex h-[20px] w-[18px] items-center justify-center rounded-[3px] border-2 border-[#444] text-[#333]">
            <svg viewBox="0 0 8 10" className="h-[10px] w-[8px]"><polygon points="1,0 8,5 1,10" fill="#444" /></svg>
          </div>
        </div>

        <div className="mt-[9px] flex h-[181px] w-[1617px] border border-[#8a8e98] bg-white">
          <div className="flex min-w-0 flex-1 flex-col">
            <div className="flex h-[21px] items-center border-b border-[#777] bg-linear-to-b from-[#f2f3f6] to-[#d0d3db] text-[#333]">
              <div className="w-[150px] border-r border-[#aaa] text-center leading-[20px]">Idő</div>
              <div className="flex-1 text-center">Üzenetek</div>
            </div>
          </div>
          <div className="flex w-[16px] flex-col">
            <div className="h-[21px] border-b border-[#777] bg-[#d0d3db]" />
            <VScroll className="w-[16px] flex-1" />
          </div>
        </div>
      </div>
    </div>
  );
}

function StatusCell({ w, label, value }: { w: string; label: string; value: string }) {
  return (
    <div className={"flex h-full shrink-0 items-center gap-[6px] whitespace-nowrap border-r border-[#b4b8c2] text-[12.4px] " + w}>
      <span>{label}</span><span className="text-[#1f9a2a]">{value}</span>
    </div>
  );
}

function TaskWin({ w, text, active, icon }: { w: string; text: string; active?: boolean; icon: React.ReactNode }) {
  return (
    <div className={"flex h-[25px] shrink-0 items-center gap-[5px] overflow-hidden whitespace-nowrap rounded-t-[3px] pl-[3px] text-[12.2px] text-[#d4d4d0] " + w + (active ? " bg-[#4c4c48]" : " bg-[#34342f]")}>
      {icon}
      {text}
    </div>
  );
}

function Graph({ children }: { children?: React.ReactNode }) {
  return <div className="relative h-[24px] w-[39px] overflow-hidden border border-[#999] bg-black">{children}</div>;
}

const TI = ({ children, s = 17 }: { children: React.ReactNode; s?: number }) => (
  <svg viewBox="0 0 17 17" width={s} height={s} className="shrink-0">{children}</svg>
);
const Swirl = <><rect x="1" y="1" width="15" height="15" rx="3" fill="#4a48b8" /><circle cx="8.5" cy="8.5" r="4" fill="none" stroke="#dfe0f4" strokeWidth="2" /><rect x="11" y="2" width="4" height="4" fill="#9ab0e0" /></>;
const Note = <><rect x="3" y="1" width="11" height="15" fill="#f1e8c8" stroke="#888" /><path d="M5 5h7M5 8h7M5 11h7" stroke="#999" /><path d="M9 14l5-11 2 1-5 11z" fill="#e0a020" /></>;

export default function App() {
  return (
    <div className="flex h-[1080px] w-[1920px] flex-col overflow-hidden bg-[#d6d9e1] font-['DejaVu_Sans','Liberation_Sans',sans-serif] text-[12.5px] leading-[16px] text-[#222]">
      <div className="relative flex h-[20px] shrink-0 items-center justify-center border-y border-[#2c3c70] bg-linear-to-b from-[#6681d2] to-[#5069b0] pr-[58px] font-['DejaVu_Sans_Condensed','DejaVu_Sans',sans-serif] text-[11.4px] font-bold text-[#e4e8f4]">
        DEMO10037pzmkZEU @ DEMO - Dukascopy Europe IBS AS
        <div className="absolute right-[3px] top-[3px] flex gap-[7px]">
          <div className="flex h-[12px] w-[12px] items-end justify-center rounded-[3px] bg-[#8497cc] pb-[1px]"><div className="h-[2px] w-[7px] bg-white" /></div>
          <div className="flex h-[12px] w-[12px] items-center justify-center rounded-[3px] bg-[#8497cc]"><div className="h-[6px] w-[6px] border border-white" /></div>
          <div className="flex h-[12px] w-[12px] items-center justify-center rounded-[3px] bg-[#8497cc]"><svg viewBox="0 0 8 8" className="h-[8px] w-[8px]"><path d="M1 1l6 6M7 1l-6 6" stroke="#fff" strokeWidth="1.6" /></svg></div>
        </div>
      </div>

      <div className="flex h-[23px] shrink-0 items-center border-b border-[#9a9ea6] bg-linear-to-b from-white to-[#d4d7de] pl-[10px] pr-[10px] text-[#222]">
        <div className="flex gap-[9px]">
          <span className="w-[20px]"><u>F</u>ájl</span><span>Portfolió</span><span>Hírek</span><span>Szolgáltatások</span><span>Eszközök</span><span>Súgó</span>
        </div>
        <b className="ml-auto text-[11.8px]">2015-09-03 19:18:14 UTC</b>
      </div>

      <div className="flex min-h-0 flex-1">
        <Left />
        <div className="flex w-[11px] shrink-0 items-center justify-center">
          <svg viewBox="0 0 8 12" className="-mt-[453px] h-[12px] w-[8px]"><path d="M7 1L2 6l5 5" fill="none" stroke="#777" strokeWidth="1.6" /></svg>
        </div>
        <Right />
      </div>

      <div className="flex h-[17px] shrink-0 items-center border-t border-[#c2c6ce] bg-[#d9dce3] text-[#222]">
        <StatusCell w="w-[165px] pl-[5px]" label="Egyenleg:" value="USD 5,000.00" />
        <StatusCell w="w-[204px] pl-[8px]" label="Szabad margin:" value="USD 5,000.00" />
        <StatusCell w="w-[183px] pl-[7px]" label="Használt margin:" value="USD 0.00" />
        <StatusCell w="w-[209px] pl-[7px]" label="Nyereség/Veszteség:" value="USD 0.00" />
        <StatusCell w="w-[174px] pl-[7px]" label="Tőkeáttét használat:" value="0%" />
        <div className="ml-[9px]"><Check /></div>
        <span className="ml-[7px]">Egy kattintás mód</span>
        <div className="ml-auto flex h-full items-center whitespace-nowrap border-l border-[#b4b8c2] pl-[7px]">
          <div className="h-[12px] w-[11px] border border-[#0a6a0a] bg-[#16e016]" />
          <span className="ml-[3px] w-[99px] border-r border-[#b4b8c2]">Csatlakoztatva</span>
          <span className="ml-[8px] mr-[5px]">Leválasztott: 0</span>
        </div>
      </div>

      <div className="flex h-[27px] shrink-0 items-end border-t border-[#111] bg-linear-to-b from-[#3a3a35] to-[#28281f]">
        <div className="flex h-full items-center pl-[4px] text-[#cfcfcb]">
          <Settings size={15} color="#cfcfcb" />
          <b className="ml-[5px] w-[44px]">Menü</b>
          <svg viewBox="0 0 22 18" className="h-[18px] w-[22px] shrink-0"><rect width="22" height="18" rx="1" fill="#3f6db4" /><rect width="22" height="5" fill="#dfe6f2" /><rect x="5" y="16" width="12" height="2" fill="#244a80" /></svg>
          <div className="ml-[11px] flex gap-[6px]">
            <TI>{Swirl}</TI>
            <TI><rect x="1" y="1" width="15" height="15" rx="3" fill="#9ac4e8" /><path d="M3 6q5 -4 11 0-2 8-5 8-4-2-6-8" fill="#2f88c8" /></TI>
            <TI>{Note}</TI>
            <TI><rect x="2" y="1" width="13" height="15" rx="1" fill="#c8c8c0" stroke="#777" /><rect x="4" y="3" width="9" height="3" fill="#888" /><path d="M4 9h2M8 9h2M12 9h2M4 12h2M8 12h2M12 12h2" stroke="#555" strokeWidth="2" /></TI>
            <TI><path d="M8.5 1l7.5 7.5-7.5 7.5L1 8.5z" fill="#30a8e0" /><path d="M8.5 5l3.5 3.5-3.5 3.5L5 8.5z" fill="#1a2030" /></TI>
            <TI><rect x="1" y="1" width="15" height="15" rx="2" fill="#111" stroke="#ccc" /><path d="M4 5l3 2-3 2M8 11h4" stroke="#eee" fill="none" /></TI>
          </div>
        </div>
        <div className="ml-[12px] flex gap-[3px]">
          <TaskWin w="w-[159px]" icon={<TI s={14}>{Swirl}</TI>} text="Technikai elemzés,..." />
          <TaskWin w="w-[159px]" icon={<TI s={14}>{Note}</TI>} text="[jforex.txt (~/Aszt..." />
          <TaskWin w="w-[161px]" icon={<TI s={14}><circle cx="8.5" cy="8.5" r="7.5" fill="#f0e8d8" /><path d="M1 8.5h15" stroke="#3c3c80" strokeWidth="3" /></TI>} text="Java - JForex-SDK/s..." />
          <TaskWin w="w-[160px]" active icon={<TI s={14}><path d="M2 15l5-9 3 3 5-7v13z" fill="#c05030" /><path d="M2 15h13" stroke="#e0b030" strokeWidth="2" /></TI>} text="DEMO10037pzmk..." />
        </div>
        <div className="ml-auto flex h-full items-center">
          <PenLine size={15} color="#ddd" />
          <Volume2 size={16} color="#ddd" className="ml-[4px]" />
          <div className="ml-[6px] flex h-full w-[25px] items-center justify-center bg-[#c8c8c4] font-bold text-[#555]">1</div>
          <div className="flex h-full w-[24px] items-center justify-center bg-[#3c3c38] font-bold text-[#ccc]">2</div>
          <div className="ml-[6px] flex">
            <Graph>
              <svg viewBox="0 0 39 24" className="absolute inset-0 h-full w-full"><path d="M1 24v-3M4 24v-2M7 24v-4M10 24v-2M14 24v-1M18 24v-3M22 24v-2M26 24v-2M30 24v-3M34 24v-2M37 24v-4" stroke="#e0d090" /></svg>
            </Graph>
            <Graph>
              <div className="absolute inset-x-0 bottom-0 h-[7px] border-t-2 border-[#3f6db4] bg-[#86c4ee]" />
            </Graph>
            <Graph>
              <svg viewBox="0 0 39 24" className="absolute inset-0 h-full w-full"><path d="M0 24v-2h24l2-22h2l2 22h9v2z" fill="#78b858" /></svg>
            </Graph>
          </div>
          <b className="ml-[6px] mr-[4px] font-['DejaVu_Sans_Condensed','DejaVu_Sans',sans-serif] text-[13px] text-[#d8d8d4]">21:18.15</b>
        </div>
      </div>
    </div>
  );
}
